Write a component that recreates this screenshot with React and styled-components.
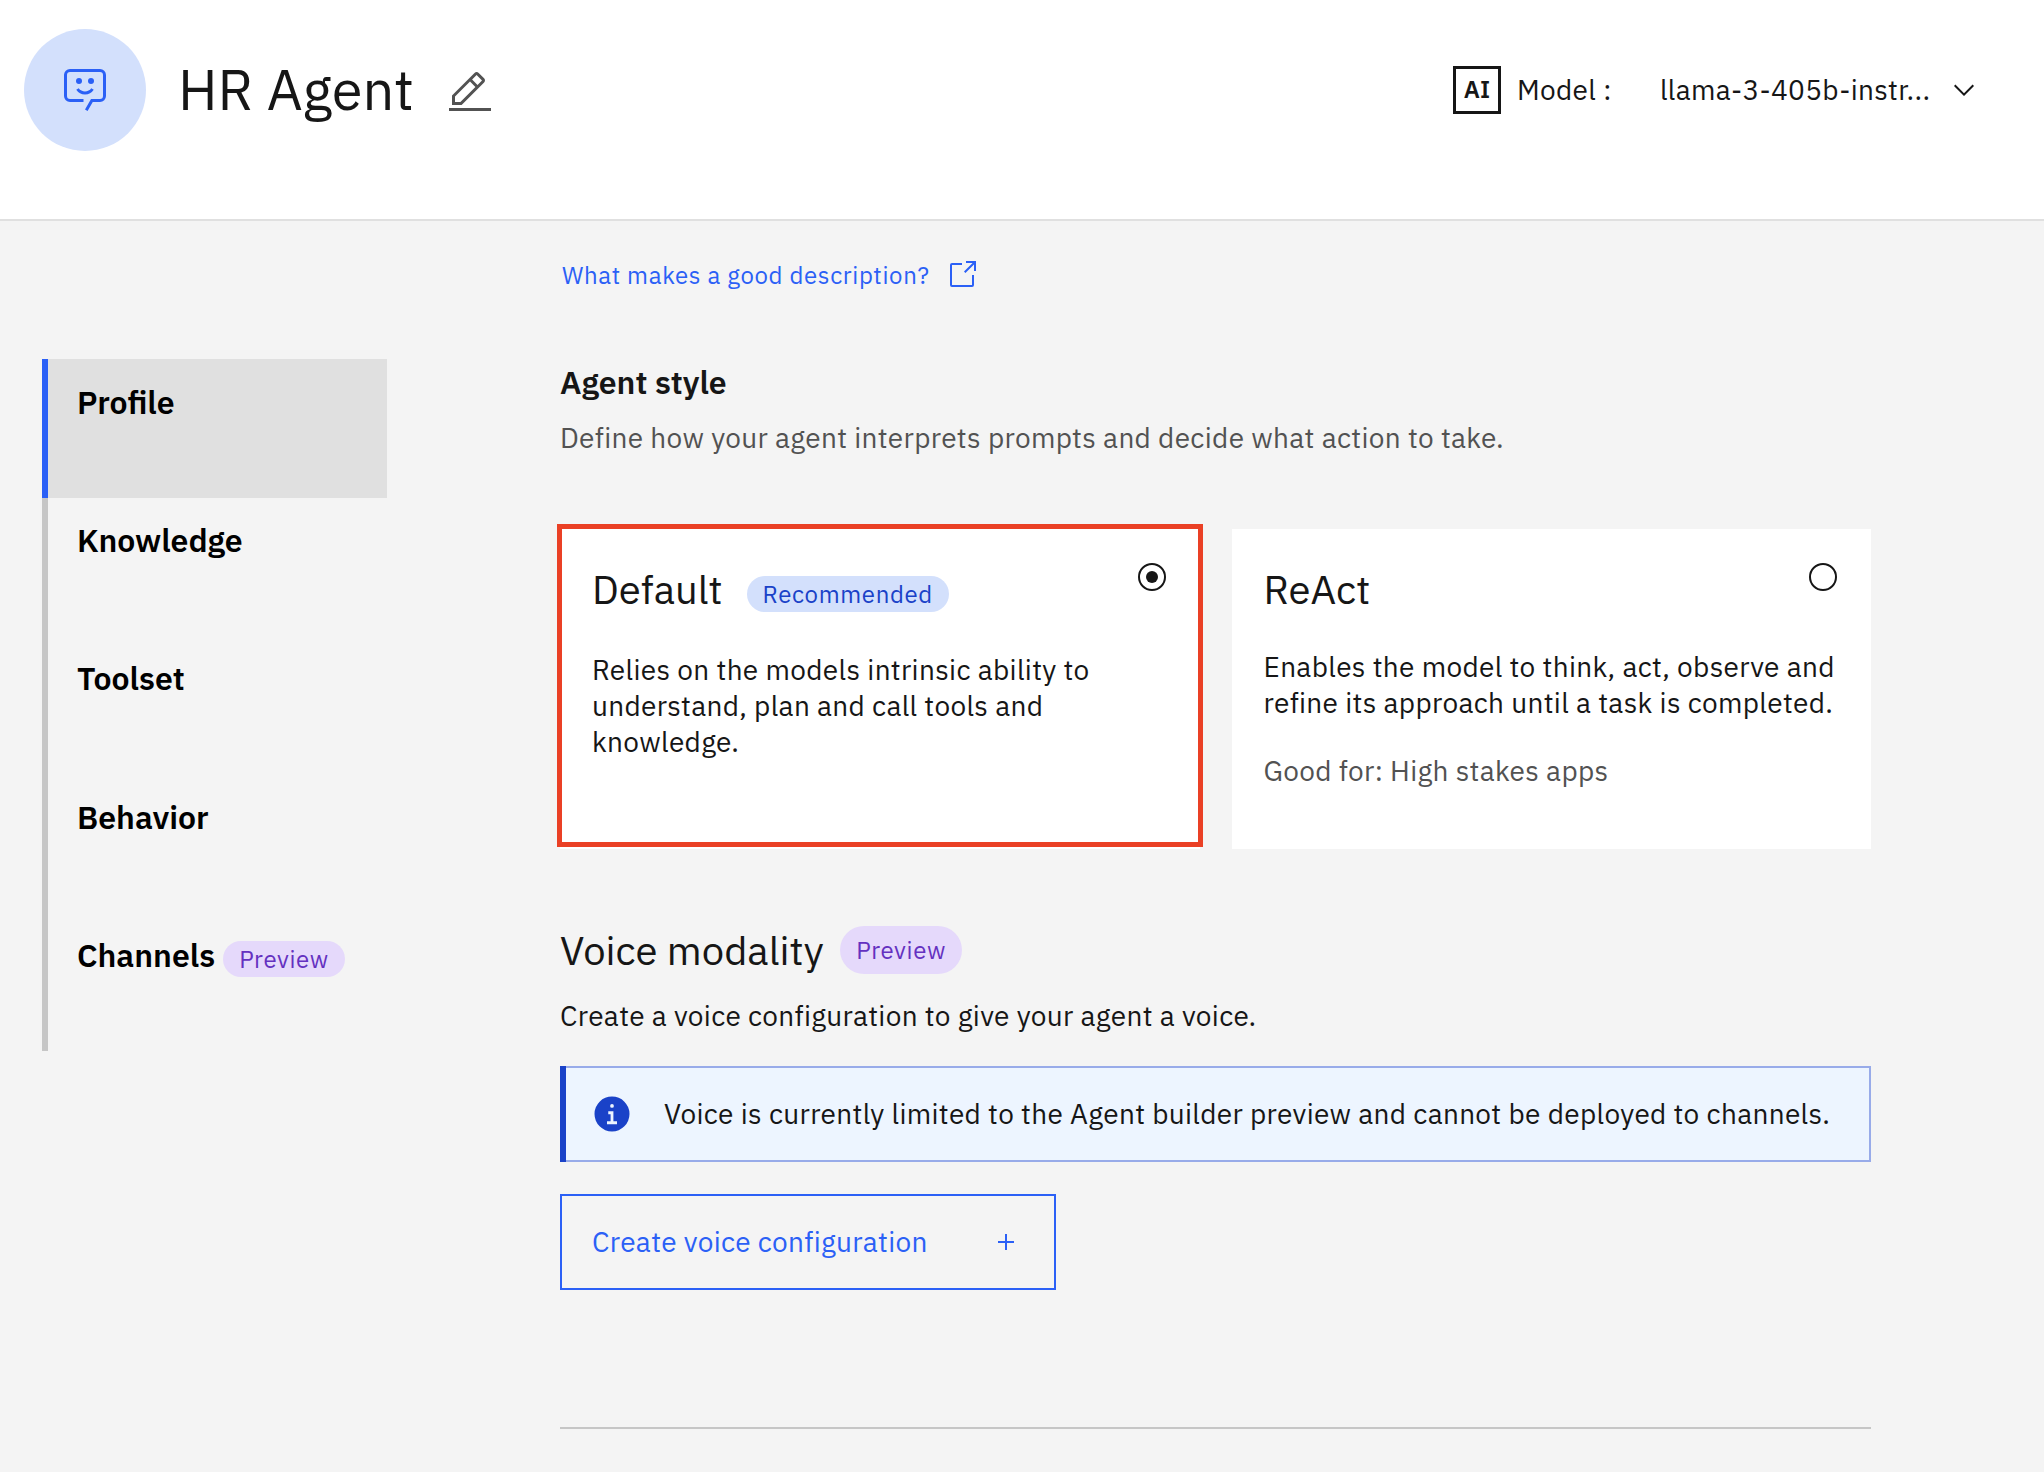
import React from "react";
import styled, { createGlobalStyle, css } from "styled-components";

const color = {
  text: "#161616",
  muted: "#525252",
  blue: "#2b60f6",
  blueDeep: "#1a42c8",
  blueSoft: "#d3e0fc",
  purple: "#6431c0",
  purpleSoft: "#e5d9fb",
  page: "#f4f4f4",
  line: "#e0e0e0",
  rail: "#c6c6c6",
  highlight: "#ea4025",
};

const GlobalStyle = createGlobalStyle`
  *, *::before, *::after { box-sizing: border-box; }
  body {
    margin: 0;
    background: ${color.page};
    color: ${color.text};
    font-family: "IBM Plex Sans", "Open Sans", sans-serif;
    font-size: 28px;
    line-height: 36px;
    letter-spacing: 0.32px;
  }
  h1, h2, h3, p { margin: 0; font-weight: 400; }
  svg { display: block; flex: none; }
`;

const Page = styled.div`
  height: 1472px;
  display: flex;
  flex-direction: column;
  overflow: hidden;
`;

const Header = styled.header`
  flex: none;
  height: 221px;
  padding: 29px 64px 0 24px;
  display: flex;
  align-items: flex-start;
  justify-content: space-between;
  background: #fff;
  border-bottom: 2px solid ${color.line};
`;

const HeaderGroup = styled.div`
  height: 122px;
  display: flex;
  align-items: center;
`;

const Avatar = styled.div`
  width: 122px;
  height: 122px;
  margin-right: 32px;
  border-radius: 50%;
  display: grid;
  place-items: center;
  background: ${color.blueSoft};
  color: ${color.blue};
`;

const AgentName = styled.h1`
  font-size: 56px;
  line-height: 64px;
  letter-spacing: 0;
  padding-bottom: 2px;
`;

const EditButton = styled.button`
  margin: 6px 0 0 32px;
  padding: 0;
  border: 0;
  background: none;
  color: ${color.muted};
`;

const AiBadge = styled.div`
  width: 48px;
  height: 48px;
  padding-bottom: 2px;
  border: 3px solid ${color.text};
  display: grid;
  place-items: center;
  font-size: 24px;
  line-height: 40px;
  font-weight: 600;
  letter-spacing: 0;
`;

const ModelLabel = styled.span`
  width: 143px;
  margin-left: 16px;
`;

const ModelSelect = styled.div`
  width: 320px;
  display: flex;
  align-items: center;
  justify-content: space-between;
  white-space: nowrap;
`;

const Body = styled.div`
  flex: 1;
  display: flex;
  align-items: flex-start;
  padding-left: 42px;
`;

const SideNav = styled.nav`
  width: 345px;
  margin: 138px 173px 0 0;
  display: flex;
  flex-direction: column;
`;

const NavItem = styled.a`
  height: 138.4px;
  padding: 20.6px 0 0 29px;
  display: flex;
  align-items: flex-start;
  gap: 8px;
  border-left: 6px solid ${color.rail};
  color: #000;
  font-size: 32px;
  line-height: 44px;
  font-weight: 600;
  letter-spacing: 0;
  ${(p) =>
    p.$active &&
    css`
      position: relative;
      height: 139px;
      margin-bottom: -0.6px;
      border-left-color: ${color.blue};
      background: ${color.line};
    `}
`;

const tagTones = {
  purple: css`
    background: ${color.purpleSoft};
    color: ${color.purple};
  `,
  blue: css`
    background: ${color.blueSoft};
    color: ${color.blueDeep};
  `,
};

const Tag = styled.span`
  height: ${(p) => (p.$large ? 48 : 36)}px;
  padding: 0 16px;
  border-radius: 24px;
  display: inline-flex;
  align-items: center;
  font-size: 24px;
  line-height: 32px;
  font-weight: 400;
  letter-spacing: 0.64px;
  ${(p) => tagTones[p.$tone]}
`;

const NavTag = styled(Tag)`
  margin-top: 7.6px;
`;

const Content = styled.main`
  width: 1311px;
  padding-top: 38px;
  display: flex;
  flex-direction: column;
`;

const HelpLink = styled.a`
  padding-left: 2px;
  display: flex;
  align-items: center;
  gap: 16px;
  color: ${color.blue};
  font-size: 24px;
  line-height: 32px;
  letter-spacing: 0.64px;
`;

const SectionTitle = styled.h2`
  margin: 69px 0 16px;
  font-size: 32px;
  line-height: 44px;
  font-weight: 600;
  letter-spacing: 0;
`;

const Muted = styled.p`
  color: ${color.muted};
`;

const CardGrid = styled.div`
  margin-top: 73px;
  display: grid;
  grid-template-columns: 1fr 1fr;
  gap: 32px;
`;

const Card = styled.section`
  position: relative;
  height: 320px;
  padding: 36px 32px 0;
  background: #fff;
`;

const Highlight = styled.div`
  position: absolute;
  inset: -5px -3.5px 2px -3px;
  border: 5px solid ${color.highlight};
  pointer-events: none;
`;

const CardHead = styled.div`
  height: ${(p) => (p.$tagged ? 51 : 48)}px;
  margin-bottom: 36px;
  display: flex;
  align-items: flex-start;
`;

const CardTitle = styled.h3`
  font-size: 40px;
  line-height: 48px;
  letter-spacing: 0;
`;

const CardTag = styled(Tag)`
  margin: 11px 0 0 24px;
`;

const Radio = styled.span`
  width: 28px;
  height: 28px;
  margin: -2px 2px 0 auto;
  border: 2px solid ${color.text};
  border-radius: 50%;
  display: grid;
  place-items: center;
  &::after {
    content: "";
    width: 12px;
    height: 12px;
    border-radius: 50%;
    background: ${(p) => (p.$checked ? color.text : "transparent")};
  }
`;

const CardNote = styled(Muted)`
  margin-top: 32px;
`;

const VoiceHeading = styled.div`
  margin: 77px 0 24px;
  display: flex;
  align-items: center;
  gap: 16.6px;
`;

const Notification = styled.div`
  height: 96px;
  margin: 32px 0;
  display: flex;
  align-items: center;
  gap: 32px;
  background: #edf5ff;
  border: 2px solid #98abe9;
  border-left: 0;
  white-space: nowrap;
`;

const NotificationBar = styled.div`
  flex: none;
  width: 6px;
  height: 96px;
  margin-right: -6px;
  background: ${color.blueDeep};
`;

const CreateButton = styled.button`
  width: 496px;
  height: 96px;
  padding: 0 32px 0 30px;
  display: flex;
  align-items: center;
  justify-content: space-between;
  border: 2px solid ${color.blue};
  background: none;
  color: ${color.blue};
  font: inherit;
  letter-spacing: inherit;
`;

const Divider = styled.hr`
  width: 100%;
  height: 2px;
  margin: 137px 0 0;
  border: 0;
  background: ${color.rail};
`;

const Icon = ({ size = 32, children }) => (
  <svg width={size} height={size} viewBox="0 0 32 32" fill="currentColor" aria-hidden="true">
    {children}
  </svg>
);

const ChatBotIcon = () => (
  <Icon size={48}>
    <path d="M16 19a6.99 6.99 0 0 1-5.833-3.129l1.666-1.107a5 5 0 0 0 8.334 0l1.666 1.107A6.99 6.99 0 0 1 16 19Z" />
    <circle cx="12" cy="10" r="2" />
    <circle cx="20" cy="10" r="2" />
    <path d="M17.736 30 16 29l4-7h6a2 2 0 0 0 2-2V6a2 2 0 0 0-2-2H6a2 2 0 0 0-2 2v14a2 2 0 0 0 2 2h9v2H6a4 4 0 0 1-4-4V6a4 4 0 0 1 4-4h20a4 4 0 0 1 4 4v14a4 4 0 0 1-4 4h-4.835Z" />
  </Icon>
);

const EditIcon = () => (
  <Icon size={48}>
    <path d="M2 26h28v2H2zM25.4 9c.8-.8.8-2 0-2.8l-3.6-3.6c-.8-.8-2-.8-2.8 0l-15 15V24h6.4l15-15zm-5-5L24 7.6l-3 3L17.4 7l3-3zM6 22v-3.6l10-10 3.6 3.6-10 10H6z" />
  </Icon>
);

const ChevronDownIcon = () => (
  <Icon>
    <path d="M16 22 6 12l1.4-1.4 8.6 8.6 8.6-8.6L26 12z" />
  </Icon>
);

const LaunchIcon = () => (
  <Icon>
    <path d="M26 28H6a2 2 0 0 1-2-2V6a2 2 0 0 1 2-2h10v2H6v20h20V16h2v10a2 2 0 0 1-2 2z" />
    <path d="M20 2v2h6.586L18 12.586 19.414 14 28 5.414V12h2V2H20z" />
  </Icon>
);

const InfoIcon = () => (
  <Icon size={40}>
    <path
      fill={color.blueDeep}
      d="M16 2a14 14 0 1 0 14 14A14 14 0 0 0 16 2Zm0 6a1.5 1.5 0 1 1-1.5 1.5A1.5 1.5 0 0 1 16 8Zm4 16.125h-8v-2.25h2.875v-5.75H13v-2.25h4.125v8H20Z"
    />
  </Icon>
);

const AddIcon = () => (
  <Icon>
    <path d="M17 15V8h-2v7H8v2h7v7h2v-7h7v-2z" />
  </Icon>
);

const navItems = [
  { label: "Profile", active: true },
  { label: "Knowledge" },
  { label: "Toolset" },
  { label: "Behavior" },
  { label: "Channels", tag: "Preview" },
];

const styles = [
  {
    title: "Default",
    tag: "Recommended",
    checked: true,
    text: "Relies on the models intrinsic ability to understand, plan and call tools and knowledge.",
  },
  {
    title: "ReAct",
    text: "Enables the model to think, act, observe and refine its approach until a task is completed.",
    note: "Good for: High stakes apps",
  },
];

export default function App() {
  return (
    <Page>
      <GlobalStyle />
      <Header>
        <HeaderGroup>
          <Avatar>
            <ChatBotIcon />
          </Avatar>
          <AgentName>HR Agent</AgentName>
          <EditButton aria-label="Edit name">
            <EditIcon />
          </EditButton>
        </HeaderGroup>
        <HeaderGroup>
          <AiBadge>AI</AiBadge>
          <ModelLabel>Model :</ModelLabel>
          <ModelSelect>
            llama-3-405b-instr...
            <ChevronDownIcon />
          </ModelSelect>
        </HeaderGroup>
      </Header>
      <Body>
        <SideNav>
          {navItems.map((item) => (
            <NavItem key={item.label} $active={item.active}>
              {item.label}
              {item.tag && <NavTag $tone="purple">{item.tag}</NavTag>}
            </NavItem>
          ))}
        </SideNav>
        <Content>
          <HelpLink>
            What makes a good description?
            <LaunchIcon />
          </HelpLink>
          <SectionTitle>Agent style</SectionTitle>
          <Muted>Define how your agent interprets prompts and decide what action to take.</Muted>
          <CardGrid>
            {styles.map((s) => (
              <Card key={s.title}>
                <CardHead $tagged={Boolean(s.tag)}>
                  <CardTitle>{s.title}</CardTitle>
                  {s.tag && <CardTag $tone="blue">{s.tag}</CardTag>}
                  <Radio $checked={s.checked} />
                </CardHead>
                <p>{s.text}</p>
                {s.note && <CardNote>{s.note}</CardNote>}
                {s.checked && <Highlight />}
              </Card>
            ))}
          </CardGrid>
          <VoiceHeading>
            <CardTitle as="h2">Voice modality</CardTitle>
            <Tag $tone="purple" $large>
              Preview
            </Tag>
          </VoiceHeading>
          <p>Create a voice configuration to give your agent a voice.</p>
          <Notification>
            <NotificationBar />
            <InfoIcon />
            Voice is currently limited to the Agent builder preview and cannot be deployed to channels.
          </Notification>
          <CreateButton>
            Create voice configuration
            <AddIcon />
          </CreateButton>
          <Divider />
        </Content>
      </Body>
    </Page>
  );
}
